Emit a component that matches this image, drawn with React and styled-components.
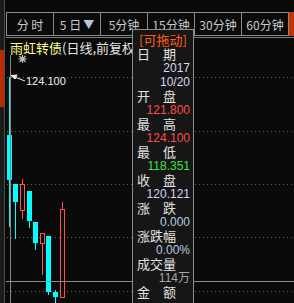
import React from 'react';
import styled, { createGlobalStyle } from 'styled-components';

const GlobalStyle = createGlobalStyle`
  html, body {
    margin: 0;
    padding: 0;
    background: #0a0a0a;
  }
  body {
    font-family: "Liberation Sans", "Noto Sans CJK SC", sans-serif;
  }
`;

const CJK = '"Noto Sans CJK SC", "Liberation Sans", sans-serif';

// K-line data, already in chart pixels (x, open/close box, wick)
const candles = [
  { x: 1, top: 97, bottom: 142, high: 39, low: 189, up: false },
  { x: 7, top: 146, bottom: 164, high: 146, low: 201, up: false },
  { x: 14, top: 146, bottom: 173, high: 141, low: 181, up: true },
  { x: 21, top: 153, bottom: 183, high: 153, low: 190, up: false },
  { x: 27, top: 184, bottom: 205, high: 184, low: 212, up: false },
  { x: 34, top: 195, bottom: 206, high: 195, low: 237, up: true },
  { x: 40, top: 198, bottom: 254, high: 198, low: 257, up: false },
  { x: 47, top: 254, bottom: 259, high: 252, low: 265, up: false },
  { x: 54, top: 171, bottom: 260, high: 164, low: 260, up: true },
];

const gridLines = [39.5, 93.5, 146.5, 199.5, 253.5];

const tabs = ['分 时', '5 日', '5分钟', '15分钟', '30分钟', '60分钟'];

const rows = [
  { label: '日期' },
  { value: '2017', color: '#d2daf2' },
  { value: '10/20', color: '#d2daf2' },
  { label: '开盘' },
  { value: '121.800', color: '#ff4c4c' },
  { label: '最高' },
  { value: '124.100', color: '#ff4c4c' },
  { label: '最低' },
  { value: '118.351', color: '#3ee23e' },
  { label: '收盘' },
  { value: '120.121', color: '#cdd4f8' },
  { label: '涨跌' },
  { value: '0.000', color: '#b4cbe0' },
  { label: '涨跌幅' },
  { value: '0.00%', color: '#b4cbe0' },
  { label: '成交量' },
  { value: '114万', color: '#a6a6a6' },
  { label: '金额' },
];

const Frame = styled.div`
  position: relative;
  width: 294px;
  height: 303px;
  display: flex;
  overflow: hidden;
  background: #0a0a0a;
`;

const LeftStrip = styled.div`
  width: 4px;
  background: #1c1c1c;
  border-right: 1px solid #4a4a4a;
  margin-right: 1px;
  display: flex;
  flex-direction: column;
`;

const StripMark = styled.div`
  margin-top: 50px;
  height: 57px;
  background: #bb2c00;
`;

const Main = styled.div`
  width: 288px;
  display: flex;
  flex-direction: column;
`;

const TopGap = styled.div`
  height: 12px;
`;

const TabBar = styled.div`
  display: flex;
  height: 24px;
`;

const Tab = styled.div`
  width: 48px;
  box-sizing: border-box;
  border: 1px solid #8a8a8a;
  margin-left: ${p => (p.$first ? 0 : -1)}px;
  display: flex;
  align-items: center;
  justify-content: center;
  font-family: ${CJK};
  font-size: 12px;
  color: #cacaca;
  white-space: pre;
`;

const Arrow = styled.span`
  margin-left: 2px;
  font-size: 11px;
  color: #b8c6d8;
`;

const TabEnd = styled.div`
  flex: 1;
  background: #c43400;
`;

const Chart = styled.div`
  position: relative;
  margin-top: 1px;
  border-top: 1px solid #7a7a7a;
`;

const Legend = styled.div`
  position: absolute;
  left: 4px;
  top: 2px;
  font-family: ${CJK};
  font-size: 13px;
  line-height: 16px;
  color: #e4e4e4;
  white-space: nowrap;
`;

const Name = styled.span`
  color: #ffff8c;
`;

const Plot = styled.svg`
  display: block;
`;

const Tip = styled.div`
  position: absolute;
  left: 132px;
  top: 29px;
  width: 62px;
  height: 290px;
  box-sizing: border-box;
  border: 1px solid #8c8c8c;
  background: #161616;
  padding: 3px 3px 0 4px;
  display: flex;
  flex-direction: column;
`;

const TipHead = styled.div`
  height: 14px;
  line-height: 14px;
  text-align: center;
  font-family: ${CJK};
  font-size: 13px;
  color: #ff5a16;
  margin-right: 1px;
`;

const Label = styled.div`
  width: 39px;
  height: 14px;
  line-height: 14px;
  display: flex;
  justify-content: space-between;
  font-family: ${CJK};
  font-size: 13px;
  color: #e2e2e2;
`;

const Value = styled.div`
  height: 14px;
  line-height: 14px;
  text-align: right;
  font-family: "Liberation Sans", "Noto Sans CJK SC", sans-serif;
  font-size: 12px;
  color: ${p => p.$color};
`;

const Candle = ({ c }) => {
  const cx = c.x + 2.5;
  const color = c.up ? '#ff5050' : '#00ffff';
  return (
    <g>
      <line x1={cx} y1={c.high} x2={cx} y2={c.low} stroke={color} strokeWidth="1" />
      {c.up ? (
        <rect x={c.x + 0.5} y={c.top + 0.5} width="4" height={c.bottom - c.top - 1} fill="#0a0a0a" stroke={color} strokeWidth="1" />
      ) : (
        <rect x={c.x} y={c.top} width="5" height={c.bottom - c.top} fill={color} />
      )}
    </g>
  );
};

const Sun = ({ x, y }) => (
  <g stroke="#bdbdbd" strokeWidth="1.2">
    <line x1={x - 4} y1={y} x2={x + 4} y2={y} />
    <line x1={x} y1={y - 4} x2={x} y2={y + 4} />
    <line x1={x - 3} y1={y - 3} x2={x + 3} y2={y + 3} />
    <line x1={x - 3} y1={y + 3} x2={x + 3} y2={y - 3} />
    <circle cx={x} cy={y} r="2" fill="#bdbdbd" stroke="none" />
  </g>
);

const App = () => (
  <>
    <GlobalStyle />
    <Frame>
      <LeftStrip>
        <StripMark />
      </LeftStrip>
      <Main>
        <TopGap />
        <TabBar>
          {tabs.map((t, i) => (
            <Tab key={t} $first={i === 0}>
              {t}
              {i === 1 && <Arrow>▼</Arrow>}
            </Tab>
          ))}
          <TabEnd />
        </TabBar>
        <Chart>
          <Plot width="288" height="265" viewBox="0 0 288 265">
            {gridLines.map(y => (
              <line key={y} x1="1" y1={y} x2="288" y2={y} stroke="#5c5c5c" strokeDasharray="1 3" />
            ))}
            {candles.map((c, i) => (
              <Candle key={i} c={c} />
            ))}
            <line x1="0" y1="243.5" x2="288" y2="243.5" stroke="#8a8a8a" />
            <line x1="4.5" y1="17" x2="4.5" y2="265" stroke="#8a8a8a" />
            <Sun x={16.5} y={21} />
            <g stroke="#f0f0f0" strokeWidth="1" fill="#f0f0f0">
              <line x1="6" y1="38" x2="19" y2="43" />
              <path d="M5 37.5 L11 37 L9 41 Z" />
            </g>
            <text x="20" y="47" fill="#f0f0f0" fontSize="11" fontFamily="Liberation Sans, sans-serif">
              124.100
            </text>
          </Plot>
          <Legend>
            <Name>雨虹转债</Name>(日线,前复权)
          </Legend>
        </Chart>
      </Main>
      <Tip>
        <TipHead>[可拖动]</TipHead>
        {rows.map((r, i) =>
          r.label ? (
            <Label key={i}>
              {r.label.split('').map((ch, j) => (
                <span key={j}>{ch}</span>
              ))}
            </Label>
          ) : (
            <Value key={i} $color={r.color}>
              {r.value}
            </Value>
          )
        )}
      </Tip>
    </Frame>
  </>
);

export default App;
